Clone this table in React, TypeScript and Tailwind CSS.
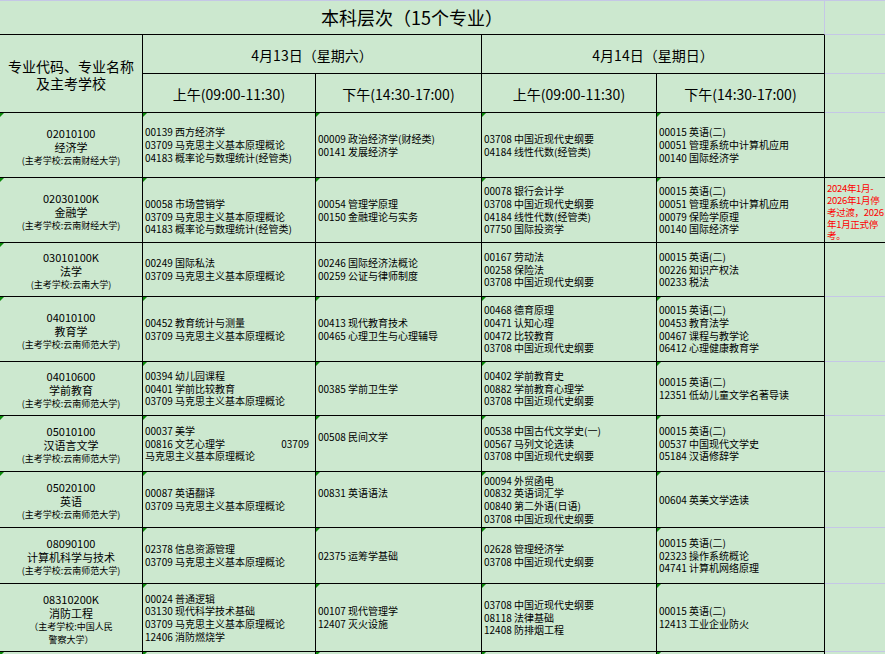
import React from "react";

type Line = { code: string; name: string; tail?: string } | null;
const L = (code: string, name: string, tail?: string): Line => ({ code, name, tail });

type Row = {
  code: string;
  name: string;
  sub: string[];
  tri0: boolean;
  triData: boolean;
  cells: Line[][];
  right: "none" | "red";
  rightBlack: boolean;
};

const rows: Row[] = [
  {
    code: "02010100",
    name: "经济学",
    sub: ["(主考学校:云南财经大学)"],
    tri0: true,
    triData: true,
    cells: [
      [L("00139", "西方经济学"), L("03709", "马克思主义基本原理概论"), L("04183", "概率论与数理统计(经管类)")],
      [L("00009", "政治经济学(财经类)"), L("00141", "发展经济学")],
      [L("03708", "中国近现代史纲要"), L("04184", "线性代数(经管类)")],
      [L("00015", "英语(二)"), L("00051", "管理系统中计算机应用"), L("00140", "国际经济学")],
    ],
    right: "none",
    rightBlack: true,
  },
  {
    code: "02030100K",
    name: "金融学",
    sub: ["(主考学校:云南财经大学)"],
    tri0: true,
    triData: true,
    cells: [
      [null, L("00058", "市场营销学"), L("03709", "马克思主义基本原理概论"), L("04183", "概率论与数理统计(经管类)")],
      [L("00054", "管理学原理"), L("00150", "金融理论与实务")],
      [L("00078", "银行会计学"), L("03708", "中国近现代史纲要"), L("04184", "线性代数(经管类)"), L("07750", "国际投资学")],
      [L("00015", "英语(二)"), L("00051", "管理系统中计算机应用"), L("00079", "保险学原理"), L("00140", "国际经济学")],
    ],
    right: "red",
    rightBlack: true,
  },
  {
    code: "03010100K",
    name: "法学",
    sub: ["(主考学校:云南大学)"],
    tri0: true,
    triData: false,
    cells: [
      [L("00249", "国际私法"), L("03709", "马克思主义基本原理概论")],
      [L("00246", "国际经济法概论"), L("00259", "公证与律师制度")],
      [L("00167", "劳动法"), L("00258", "保险法"), L("03708", "中国近现代史纲要")],
      [L("00015", "英语(二)"), L("00226", "知识产权法"), L("00233", "税法")],
    ],
    right: "none",
    rightBlack: false,
  },
  {
    code: "04010100",
    name: "教育学",
    sub: ["(主考学校:云南师范大学)"],
    tri0: true,
    triData: true,
    cells: [
      [L("00452", "教育统计与测量"), L("03709", "马克思主义基本原理概论")],
      [L("00413", "现代教育技术"), L("00465", "心理卫生与心理辅导")],
      [L("00468", "德育原理"), L("00471", "认知心理"), L("00472", "比较教育"), L("03708", "中国近现代史纲要")],
      [L("00015", "英语(二)"), L("00453", "教育法学"), L("00467", "课程与教学论"), L("06412", "心理健康教育学")],
    ],
    right: "none",
    rightBlack: false,
  },
  {
    code: "04010600",
    name: "学前教育",
    sub: ["(主考学校:云南师范大学)"],
    tri0: false,
    triData: true,
    cells: [
      [L("00394", "幼儿园课程"), L("00401", "学前比较教育"), L("03709", "马克思主义基本原理概论")],
      [L("00385", "学前卫生学")],
      [L("00402", "学前教育史"), L("00882", "学前教育心理学"), L("03708", "中国近现代史纲要")],
      [L("00015", "英语(二)"), L("12351", "低幼儿童文学名著导读")],
    ],
    right: "none",
    rightBlack: false,
  },
  {
    code: "05010100",
    name: "汉语言文学",
    sub: ["(主考学校:云南师范大学)"],
    tri0: true,
    triData: true,
    cells: [
      [L("00037", "美学"), L("00816", "文艺心理学", "03709"), L("", "马克思主义基本原理概论")],
      [L("00508", "民间文学"), null],
      [L("00538", "中国古代文学史(一)"), L("00567", "马列文论选读"), L("03708", "中国近现代史纲要")],
      [L("00015", "英语(二)"), L("00537", "中国现代文学史"), L("05184", "汉语修辞学")],
    ],
    right: "none",
    rightBlack: false,
  },
  {
    code: "05020100",
    name: "英语",
    sub: ["(主考学校:云南师范大学)"],
    tri0: true,
    triData: true,
    cells: [
      [L("00087", "英语翻译"), L("03709", "马克思主义基本原理概论")],
      [L("00831", "英语语法"), null],
      [L("00094", "外贸函电"), L("00832", "英语词汇学"), L("00840", "第二外语(日语)"), L("03708", "中国近现代史纲要")],
      [L("00604", "英美文学选读")],
    ],
    right: "none",
    rightBlack: false,
  },
  {
    code: "08090100",
    name: "计算机科学与技术",
    sub: ["(主考学校:云南师范大学)"],
    tri0: false,
    triData: true,
    cells: [
      [L("02378", "信息资源管理"), L("03709", "马克思主义基本原理概论")],
      [L("02375", "运筹学基础")],
      [L("02628", "管理经济学"), L("03708", "中国近现代史纲要")],
      [L("00015", "英语(二)"), L("02323", "操作系统概论"), L("04741", "计算机网络原理")],
    ],
    right: "none",
    rightBlack: false,
  },
  {
    code: "08310200K",
    name: "消防工程",
    sub: ["（主考学校:中国人民", "警察大学）"],
    tri0: false,
    triData: true,
    cells: [
      [L("00024", "普通逻辑"), L("03130", "现代科学技术基础"), L("03709", "马克思主义基本原理概论"), L("12406", "消防燃烧学")],
      [L("00107", "现代管理学"), L("12407", "灭火设施")],
      [L("03708", "中国近现代史纲要"), L("08118", "法律基础"), L("12408", "防排烟工程")],
      [L("00015", "英语(二)"), L("12413", "工业企业防火")],
    ],
    right: "none",
    rightBlack: false,
  },
];

function Tri() {
  return (
    <span className="absolute left-0 top-0 h-0 w-0 border-t-[4px] border-r-[4px] border-t-[#0a8a0a] border-r-transparent" />
  );
}

function CourseLine({ line }: { line: Line }) {
  if (!line) return <div className="h-[12.7px]" />;
  if (!line.code) return <div className="h-[12.7px]">{line.name}</div>;
  return (
    <div className="flex h-[12.7px]">
      <span className="w-[30px] shrink-0">{line.code}</span>
      <span>{line.name}</span>
      {line.tail && <span className="ml-auto mr-[6px]">{line.tail}</span>}
    </div>
  );
}

export default function App() {
  const cell = "relative border-r border-b border-black";
  const lightB = "border-b border-[#c5c7e6]";
  return (
    <div className="w-[885px] h-[654px] overflow-hidden bg-[#cce8cf] border-t border-[#c5c7e6] text-black font-['Noto_Sans_CJK_SC',sans-serif]">
      <div className="grid grid-cols-[143px_173px_166px_175px_168px_60px] grid-rows-[34px_39px_39px_65px_65px_54px_65px_54px_56px_56px_56px_68px_60px]">
        {/* Title */}
        <div className="col-span-5 flex items-center justify-center border-b border-r border-b-black border-r-[#c5c7e6] text-[18px]">
          本科层次（15个专业）
        </div>
        <div className={lightB} />

        {/* Header row 1 */}
        <div className={`${cell} row-span-2 flex flex-col items-center justify-center pt-[3px] text-[14px] leading-[16.6px] text-center`}>
          <div>专业代码、专业名称</div>
          <div>及主考学校</div>
        </div>
        <div className={`${cell} col-span-2 flex items-center justify-center pt-[3px] text-[14px]`}>4月13日（星期六）</div>
        <div className={`${cell} col-span-2 flex items-center justify-center pt-[3px] text-[14px]`}>4月14日（星期日）</div>
        <div className={lightB} />

        {/* Header row 2 */}
        <div className={`${cell} flex items-center justify-center pt-[2px] text-[14px]`}>上午(09:00-11:30)</div>
        <div className={`${cell} flex items-center justify-center pt-[2px] text-[14px]`}>下午(14:30-17:00)</div>
        <div className={`${cell} flex items-center justify-center pt-[2px] text-[14px]`}>上午(09:00-11:30)</div>
        <div className={`${cell} flex items-center justify-center pt-[2px] text-[14px]`}>下午(14:30-17:00)</div>
        <div className={lightB} />

        {rows.map((r, i) => (
          <React.Fragment key={i}>
            <div className={`${cell} flex flex-col items-center justify-center pt-[4px] text-center whitespace-nowrap`}>
              {r.tri0 && <Tri />}
              <div className="text-[11px] leading-[13px]">{r.code}</div>
              <div className="text-[11px] leading-[14px]">{r.name}</div>
              {r.sub.map((s, k) => (
                <div key={k} className={`text-[9px] ${k === 0 ? "leading-[14px]" : "leading-[11.6px]"}`}>
                  {s}
                </div>
              ))}
            </div>
            {r.cells.map((c, j) => (
              <div
                key={j}
                className={`${cell} flex flex-col justify-center pl-[2px] pt-[1px] text-[10px] leading-[12.7px] whitespace-nowrap overflow-hidden`}
              >
                {r.triData && <Tri />}
                {c.map((ln, k) => (
                  <CourseLine key={k} line={ln} />
                ))}
              </div>
            ))}
            {r.right === "red" ? (
              <div className="flex flex-col justify-end border-b border-black pl-[2px] text-[9.5px] leading-[11.7px] tracking-[-0.3px] text-[#ff0000] whitespace-nowrap overflow-hidden">
                <div>2024年1月-</div>
                <div>2026年1月停</div>
                <div>考过渡，2026</div>
                <div>年1月正式停</div>
                <div>考。</div>
              </div>
            ) : (
              <div className={r.rightBlack ? "border-b border-black" : lightB} />
            )}
          </React.Fragment>
        ))}

        {/* Next row, cut off at the bottom */}
        <div className={cell}>
          <Tri />
        </div>
        <div className={cell}>
          <Tri />
        </div>
        <div className={cell}>
          <Tri />
        </div>
        <div className={cell}>
          <Tri />
        </div>
        <div className={cell}>
          <Tri />
        </div>
        <div className={lightB} />
      </div>
    </div>
  );
}
